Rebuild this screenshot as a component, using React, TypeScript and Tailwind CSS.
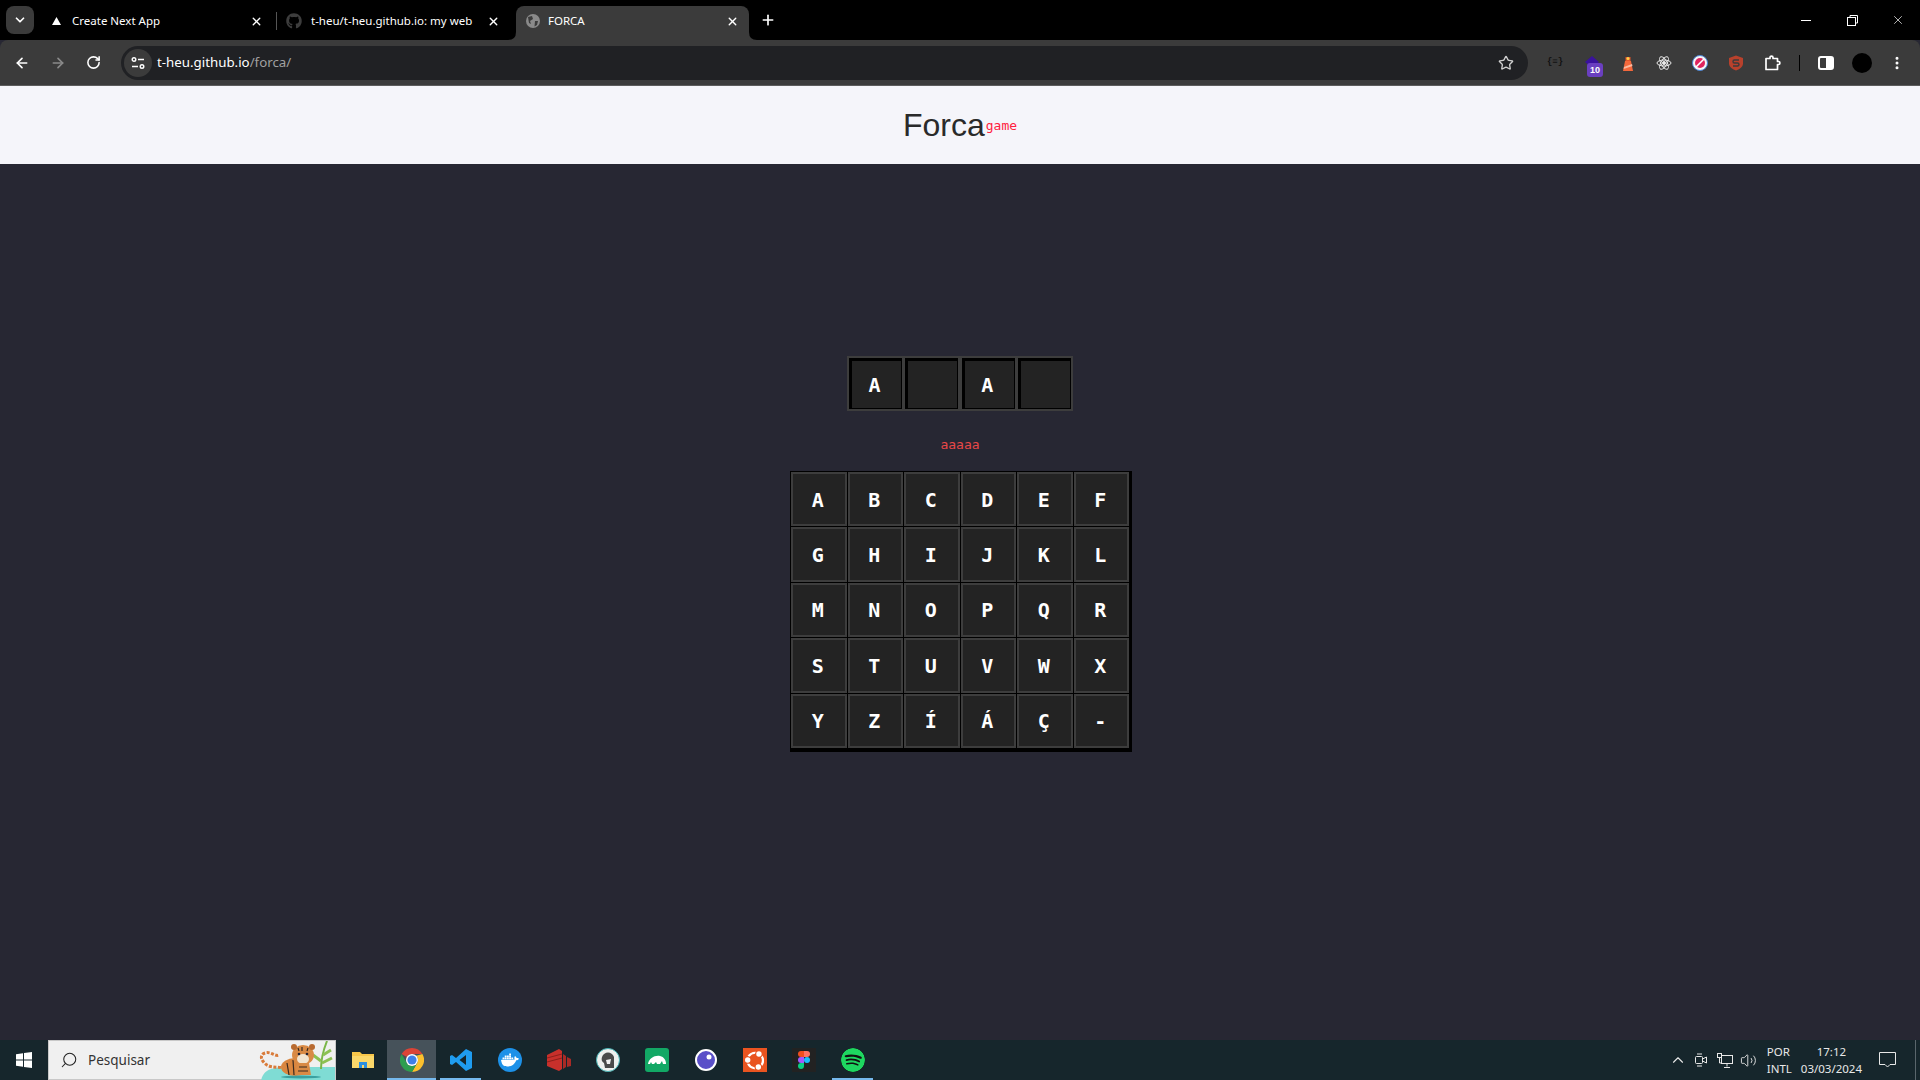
import { X, Plus, ArrowLeft, ArrowRight, RotateCw, Star, ChevronDown, ChevronUp, Search, Volume2, MoreVertical } from "lucide-react";
import { FaGithub } from "react-icons/fa";
import { SiDocker, SiUbuntu, SiSpotify } from "react-icons/si";

const keys = ["A", "B", "C", "D", "E", "F", "G", "H", "I", "J", "K", "L", "M", "N", "O", "P", "Q", "R", "S", "T", "U", "V", "W", "X", "Y", "Z", "Í", "Á", "Ç", "-"];
const word = ["A", "", "A", ""];

function TabFlare({ side }: { side: "left" | "right" }) {
  return (
    <svg
      width="8"
      height="8"
      viewBox="0 0 8 8"
      className={side === "left" ? "absolute bottom-0 -left-2" : "absolute bottom-0 -right-2"}
    >
      <path d={side === "left" ? "M8 0 V8 H0 Q8 8 8 0Z" : "M0 0 V8 H8 Q0 8 0 0Z"} fill="#3b3b3b" />
    </svg>
  );
}

function TabBar() {
  return (
    <div className="h-10 bg-black flex items-end pl-[6px] text-white text-[11.5px] font-['Noto_Sans',sans-serif]">
      <div className="w-7 h-7 mb-[6px] rounded-lg bg-[#3b3b3b] flex items-center justify-center">
        <ChevronDown size={14} strokeWidth={3} />
      </div>
      <div className="w-[235px] h-[34px] ml-[7px] flex items-center pl-[11px] pr-[13px] pb-1">
        <svg width="9" height="8" viewBox="0 0 9 8" className="mr-[11px]">
          <path d="M4.5 0 L9 8 H0Z" fill="#fff" />
        </svg>
        <span>Create Next App</span>
        <X size={13} strokeWidth={2.5} className="ml-auto" />
      </div>
      <div className="w-[240px] h-[34px] flex items-center pl-[10px] pr-4 pb-1 relative">
        <div className="absolute left-0 top-[6px] w-px h-[18px] bg-[#555]" />
        <FaGithub size={16} className="text-[#3d3d3d] mr-[9px]" />
        <span>t-heu/t-heu.github.io: my web</span>
        <X size={13} strokeWidth={2.5} className="ml-auto" />
      </div>
      <div className="relative w-[233px] h-[34px] bg-[#3b3b3b] rounded-t-lg flex items-center pl-[10px] pr-[10px] pb-1">
        <TabFlare side="left" />
        <TabFlare side="right" />
        <svg width="14" height="14" viewBox="0 0 14 14" className="mr-[8px]">
          <circle cx="7" cy="7" r="7" fill="#8a8a8a" />
          <path d="M2 3 L6 2 L7 5 L4 7 L5 10 L3 9Z M9 7 L12 7 L11 11 L8.5 12.5Z" fill="#3b3b3b" />
        </svg>
        <span>FORCA</span>
        <X size={13} strokeWidth={2.5} className="ml-auto" />
      </div>
      <Plus size={16} strokeWidth={2.5} className="ml-[11px] mb-3" />
      <div className="ml-auto flex items-center h-10 pr-[15px] gap-[36px]">
        <div className="w-[10px] h-px bg-white" />
        <svg width="11" height="11" viewBox="0 0 11 11" fill="none" stroke="#fff">
          <rect x="0.5" y="2.5" width="8" height="8" />
          <path d="M3 2.5 V0.5 H10.5 V8 H8.5" />
        </svg>
        <X size={14} strokeWidth={1.2} className="-ml-[3px]" />
      </div>
    </div>
  );
}

function ExtensionIcons() {
  return (
    <div className="flex items-center text-[#e8e8e8] ml-[9px] shrink-0">
      <div className="w-9 flex justify-center text-[9px] font-bold text-[#111] font-['Liberation_Mono',monospace]">{"{≡}"}</div>
      <div className="relative w-[37px] flex justify-center">
        <svg width="16" height="16" viewBox="0 0 16 16">
          <path d="M8 1 L15 7 L8 13 L1 7Z" fill="#3a129c" />
        </svg>
        <span className="absolute -bottom-[6px] left-[14px] w-4 h-[14px] rounded-[3px] bg-[#6a3fc0] text-white text-[9px] font-bold leading-[14px] text-center font-['Liberation_Sans',sans-serif]">
          10
        </span>
      </div>
      <div className="w-[36px] flex justify-center">
        <svg width="12" height="16" viewBox="0 0 12 16">
          <path d="M3 6 H9 L11 16 H1Z" fill="#f4683c" />
          <path d="M3.5 2 H8.5 V6 H3.5Z" fill="#e4552a" />
          <circle cx="6" cy="3.5" r="1.5" fill="#fbd34a" />
          <path d="M2 12 L10 9 L10.5 11 L1.6 14Z" fill="#fbb9a0" />
        </svg>
      </div>
      <div className="w-[36px] flex justify-center">
        <svg width="16" height="16" viewBox="-8 -8 16 16" fill="none" stroke="#e8e8e8" strokeWidth="1">
          <ellipse rx="7" ry="3" />
          <ellipse rx="7" ry="3" transform="rotate(60)" />
          <ellipse rx="7" ry="3" transform="rotate(120)" />
          <circle r="1.5" fill="#e8e8e8" />
        </svg>
      </div>
      <div className="w-[36px] flex justify-center">
        <svg width="16" height="16" viewBox="0 0 16 16">
          <circle cx="8" cy="8" r="7.5" fill="#f5f5f5" stroke="#4a86d8" strokeWidth="1" />
          <circle cx="8" cy="8" r="5" fill="#e0245e" />
          <path d="M4 12 L12 4" stroke="#fff" strokeWidth="1.6" />
        </svg>
      </div>
      <div className="w-[36px] flex justify-center">
        <svg width="16" height="16" viewBox="0 0 16 16" fill="none">
          <path d="M8 0.5 L15 3 V8.5 C15 12 11 14.5 8 15.5 C5 14.5 1 12 1 8.5 V3Z" fill="#b8412c" />
          <path d="M11 5 H6.5 C4.5 5 4.5 8 6.5 8 H9.5 C11.5 8 11.5 11 9.5 11 H5" stroke="#3b3b3b" strokeWidth="1.4" />
        </svg>
      </div>
      <div className="w-[37px] flex justify-center">
        <svg width="16" height="16" viewBox="0 0 16 16" fill="none" stroke="#fff" strokeWidth="1.7" strokeLinejoin="round">
          <path d="M1 3.5 H5 V2.5 C5 0.7 8 0.7 8 2.5 V3.5 H12.5 V6.5 H13.5 C15.4 6.5 15.4 9.5 13.5 9.5 H12.5 V14.5 H1 Z" />
        </svg>
      </div>
      <div className="w-px h-4 bg-black mr-[18px] ml-[8px]" />
      <div className="w-[16px] h-[14px] rounded-[3px] border-2 border-white bg-[linear-gradient(90deg,transparent_50%,#fff_50%)] mr-[18px]" />
      <div className="w-5 h-5 rounded-full bg-black mr-[17px]" />
      <MoreVertical size={16} strokeWidth={2.5} className="text-white" />
    </div>
  );
}

function Toolbar() {
  return (
    <div className="h-[46px] bg-[#3b3b3b] rounded-t-lg border-b border-[#5c5c5c] flex items-center pl-[14px] pr-1 font-['Noto_Sans',sans-serif]">
      <ArrowLeft size={16} strokeWidth={2.5} className="text-white" />
      <ArrowRight size={16} strokeWidth={2.5} className="ml-[20px] text-[#8a8a8a]" />
      <RotateCw size={15} strokeWidth={2.5} className="ml-[20px] text-white" />
      <div className="ml-[20px] w-[1407px] h-[34px] rounded-full bg-[#202124] flex items-center pl-[3px] pr-[14px]">
        <div className="w-7 h-7 rounded-full bg-[#3b3b3b] flex items-center justify-center">
          <svg width="14" height="14" viewBox="0 0 14 14" fill="none" stroke="#fff" strokeWidth="1.4">
            <circle cx="3" cy="3.5" r="1.8" />
            <path d="M7 3.5 H13 M1 10.5 H7" />
            <circle cx="11" cy="10.5" r="1.8" />
          </svg>
        </div>
        <span className="ml-[5px] mt-px text-[13.3px] text-white">
          t-heu.github.io<span className="text-[#a0a0a0]">/forca/</span>
        </span>
        <Star size={16} strokeWidth={2} className="ml-auto text-[#d0d0d0]" />
      </div>
      <ExtensionIcons />
    </div>
  );
}

function WordRow() {
  return (
    <div className="w-[226px] h-[55px] p-[2px] bg-[#3d3d3d] grid grid-cols-4 gap-x-[3.33px]">
      {word.map((l, i) => (
        <div
          key={i}
          className="bg-[#232323] border-black border-t-[3px] border-l-[3px] border-r border-b flex items-center justify-center text-white text-xl font-bold font-['DejaVu_Sans_Mono',monospace] pr-1"
        >
          {l}
        </div>
      ))}
    </div>
  );
}

function Keyboard() {
  return (
    <div className="w-[342px] ml-[2px] bg-black pl-px pt-px pr-[3px] pb-1 grid grid-cols-6 gap-px auto-rows-[54.4px]">
      {keys.map((k) => (
        <div
          key={k}
          className="bg-[#232323] border-2 border-[#3d3d3d] flex items-center justify-center pt-px pr-[2px] text-white text-xl font-bold font-['DejaVu_Sans_Mono',monospace]"
        >
          {k}
        </div>
      ))}
    </div>
  );
}

function ChromeLogo() {
  return (
    <svg width="24" height="24" viewBox="0 0 24 24">
      <path d="M12 0 A12 12 0 0 1 22.4 6 H12 A6 6 0 0 0 6.8 9 L1.6 6 A12 12 0 0 1 12 0Z" fill="#db4437" />
      <path d="M22.4 6 A12 12 0 0 1 12 24 L17.2 15 A6 6 0 0 0 17.2 9 H12Z" fill="#fbc02d" />
      <path d="M1.6 6 A12 12 0 0 0 12 24 L17.2 15 A6 6 0 0 1 6.8 15Z" fill="#2e9e4f" />
      <circle cx="12" cy="12" r="6" fill="#fff" />
      <circle cx="12" cy="12" r="4.6" fill="#3f7fe8" />
    </svg>
  );
}

function Tiger() {
  return (
    <svg width="76" height="40" viewBox="0 0 76 40" className="absolute right-0 top-0">
      <path d="M2 40 C4 28 14 26 30 26 H76 V40Z" fill="#7fdcd4" />
      <path d="M62 28 C62 18 64 10 68 0" stroke="#7ab648" strokeWidth="2" fill="none" />
      <path d="M62 20 L54 14 M63 22 L73 17 M64 14 L72 9" stroke="#8cc152" strokeWidth="3" />
      <path d="M30 30 C24 24 14 28 8 24 C2 20 0 14 6 12 C12 10 16 16 20 14" stroke="#d97b3a" strokeWidth="3" fill="none" strokeDasharray="3 1.5" />
      <ellipse cx="36" cy="26" rx="14" ry="9" fill="#d9863f" />
      <path d="M28 22 L30 34 M34 19 L35 34 M40 19 L40 34" stroke="#3a2a20" strokeWidth="1.2" />
      <g transform="translate(-4 0)">
        <ellipse cx="48" cy="14" rx="11" ry="10" fill="#d98a45" />
        <circle cx="39" cy="6" r="3" fill="#b86a30" />
        <circle cx="57" cy="6" r="3" fill="#b86a30" />
        <ellipse cx="48" cy="18" rx="6" ry="5" fill="#f2e4d0" />
        <circle cx="44" cy="13" r="1.3" fill="#223" />
        <circle cx="52" cy="13" r="1.3" fill="#223" />
        <path d="M47 6 V10 M43 7 L44 10 M53 7 L52 10" stroke="#3a2a20" strokeWidth="1.2" />
        <path d="M42 22 H54 L56 34 H40Z" fill="#d98a45" />
        <path d="M44 26 H52 M43 30 H53" stroke="#3a2a20" strokeWidth="1.2" />
      </g>
      <ellipse cx="42" cy="36" rx="20" ry="1.5" fill="#3aa0a0" />
    </svg>
  );
}

function TaskIcon({ active, running, children }: { active?: boolean; running?: boolean; children: React.ReactNode }) {
  return (
    <div className={`relative w-[49px] h-10 flex items-center justify-center ${active ? "bg-[#46525a]" : ""}`}>
      {children}
      {running && <div className={`absolute bottom-0 h-[2px] bg-[#76b9ed] ${active ? "left-0 right-0" : "left-1 right-1"}`} />}
    </div>
  );
}

function Taskbar() {
  return (
    <div className="h-10 bg-[#16262c] flex items-center text-white font-['Noto_Sans',sans-serif]">
      <div className="w-12 flex justify-center">
        <svg width="16" height="16" viewBox="0 0 16 16" fill="#fff">
          <path d="M0 2.2 L7 1.2 V7.6 H0Z M8 1 L16 0 V7.6 H8Z M0 8.4 H7 V14.8 L0 13.8Z M8 8.4 H16 V16 L8 15Z" />
        </svg>
      </div>
      <div className="relative w-[288px] h-10 bg-[#f0f0f0] border border-[#c8c8c8] flex items-center pl-[11px] text-[#333]">
        <Search size={18} strokeWidth={1.4} className="-scale-x-100 text-[#222]" />
        <span className="ml-[10px] text-[13.5px]">Pesquisar</span>
        <Tiger />
      </div>
      <div className="flex ml-[2px]">
        <TaskIcon>
          <svg width="22" height="20" viewBox="0 0 22 20">
            <path d="M0 2 H8 L10 4 H22 V18 H0Z" fill="#f8c74a" />
            <path d="M0 6 H22 V18 H0Z" fill="#fbd86a" />
            <path d="M7 12 H15 V18 H12 V15 H10 V18 H7Z" fill="#2b8fe0" />
          </svg>
        </TaskIcon>
        <TaskIcon active running>
          <ChromeLogo />
        </TaskIcon>
        <TaskIcon running>
          <svg width="24" height="24" viewBox="0 0 24 24">
            <path d="M17 1 L23 4 V20 L17 23 L7 14 L3 17 L1 16 V8 L3 7 L7 10Z M17 7 L10.5 12 L17 17Z" fill="#1f9cf0" fillRule="evenodd" />
          </svg>
        </TaskIcon>
        <TaskIcon>
          <SiDocker size={24} className="text-white bg-[#1d91e8] rounded-full p-[3px]" />
        </TaskIcon>
        <TaskIcon>
          <svg width="24" height="22" viewBox="0 0 24 22">
            <path d="M0 6 L12 0 L15 2 V20 L12 22 L0 17Z" fill="#c8302b" />
            <path d="M16 5 L19 7 V18 L16 20Z M20 8 L24 10 V17 L20 18Z" fill="#a92a26" />
            <path d="M0 9 L15 5 M0 13 L15 9" stroke="#8e1f1b" strokeWidth="1" />
          </svg>
        </TaskIcon>
        <TaskIcon>
          <svg width="24" height="24" viewBox="0 0 24 24">
            <circle cx="12" cy="12" r="11.5" fill="#eef0ee" stroke="#45b3b5" strokeWidth="1" />
            <path d="M6 9 C8 3 16 3 18 9 V20 H9 L8 15 C6 14 5 12 6 9Z" fill="#4a4a4a" />
            <path d="M10 12 L15 11 L14 16 H11Z" fill="#f0f0f0" />
          </svg>
        </TaskIcon>
        <TaskIcon>
          <svg width="24" height="24" viewBox="0 0 24 24">
            <rect width="24" height="24" rx="3" fill="#12a865" />
            <path d="M3 16 C4 10 10 7 15 8 C19 9 21 12 21 16 H18 L17 13 L15 16 H12 L11 14 L9 16 H7 L6 14 L5 16Z" fill="#fff" />
          </svg>
        </TaskIcon>
        <TaskIcon>
          <svg width="22" height="22" viewBox="0 0 22 22">
            <circle cx="11" cy="11" r="10" fill="#5a4fc8" stroke="#fff" strokeWidth="2" />
            <circle cx="14" cy="8" r="2.5" fill="#fff" />
          </svg>
        </TaskIcon>
        <TaskIcon>
          <div className="w-6 h-6 bg-[#e95420] flex items-center justify-center">
            <SiUbuntu size={19} className="text-white" />
          </div>
        </TaskIcon>
        <TaskIcon>
          <div className="w-6 h-6 bg-[#222] flex items-center justify-center">
            <svg width="12" height="18" viewBox="0 0 12 18">
              <path d="M6 0 H3 A3 3 0 0 0 3 6 H6Z" fill="#f24e1e" />
              <path d="M6 0 H9 A3 3 0 0 1 9 6 H6Z" fill="#ff7262" />
              <path d="M6 6 H3 A3 3 0 0 0 3 12 H6Z" fill="#a259ff" />
              <circle cx="9" cy="9" r="3" fill="#1abcfe" />
              <path d="M3 12 H6 V15 A3 3 0 1 1 3 12Z" fill="#0acf83" />
            </svg>
          </div>
        </TaskIcon>
        <TaskIcon running>
          <SiSpotify size={24} className="text-[#1ed760] bg-[#111] rounded-full" />
        </TaskIcon>
      </div>
      <div className="ml-auto flex items-center h-10 text-[11.5px] text-[#e8e8e8]">
        <ChevronUp size={18} strokeWidth={1.5} />
        <svg width="14" height="16" viewBox="0 0 14 16" fill="none" stroke="#e8e8e8" className="ml-[7px]">
          <rect x="1.5" y="4.5" width="7" height="7" rx="1" />
          <path d="M8.5 7 L12.5 5 V11 L8.5 9 M3 2 H8 M3 14 H8" />
        </svg>
        <svg width="16" height="15" viewBox="0 0 16 15" fill="none" stroke="#e8e8e8" className="ml-[9px]">
          <rect x="4.5" y="2.5" width="11" height="8" />
          <rect x="0.5" y="0.5" width="4" height="4" />
          <path d="M2.5 4.5 V10 H4.5 M10 10.5 V13.5 M7 14.5 H13" />
        </svg>
        <Volume2 size={17} strokeWidth={1.3} className="ml-[7px]" />
        <div className="ml-[10px] leading-[17px] flex flex-col">
          <span>POR</span>
          <span>INTL</span>
        </div>
        <div className="ml-[9px] leading-[17px] flex flex-col items-center">
          <span>17:12</span>
          <span>03/03/2024</span>
        </div>
        <svg width="17" height="16" viewBox="0 0 17 16" fill="none" stroke="#e8e8e8" className="ml-[17px]">
          <path d="M0.5 0.5 H16.5 V12.5 H11 L8.5 15 L6 12.5 H0.5Z" />
        </svg>
        <div className="ml-[19px] mr-[4px] w-px h-10 bg-[#5a666c]" />
      </div>
    </div>
  );
}

export default function App() {
  return (
    <div className="h-screen flex flex-col bg-[#272733] overflow-hidden">
      <TabBar />
      <Toolbar />
      <header className="h-[78px] bg-[#f5f5fa] flex items-center justify-center">
        <h1 className="text-[32px] text-[#2a2a2a] font-['Liberation_Sans',sans-serif]">Forca</h1>
        <span className="text-[13px] text-[#ff2040] font-['DejaVu_Sans_Mono',monospace] ml-px mt-[2px]">game</span>
      </header>
      <main className="flex-1 flex flex-col items-center pt-[192px]">
        <WordRow />
        <p className="mt-[25px] mb-[17px] text-[13px] leading-[18px] text-[#e84848] font-['DejaVu_Sans_Mono',monospace]">aaaaa</p>
        <Keyboard />
      </main>
      <Taskbar />
    </div>
  );
}
